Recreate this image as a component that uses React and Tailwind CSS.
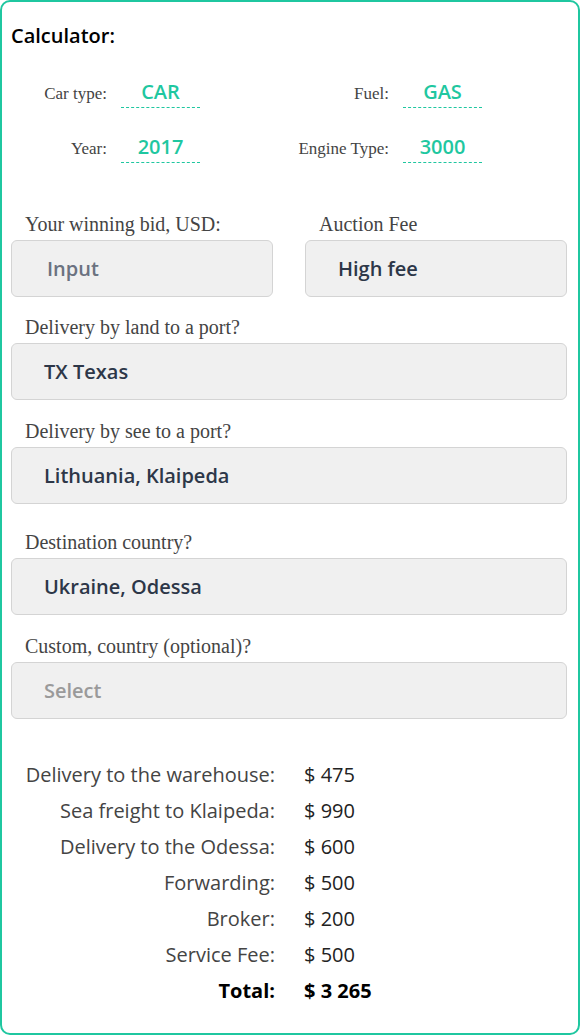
const spec = [
  [
    { label: 'Car type:', value: 'CAR' },
    { label: 'Fuel:', value: 'GAS' },
  ],
  [
    { label: 'Year:', value: '2017' },
    { label: 'Engine Type:', value: '3000' },
  ],
];

const totals = [
  ['Delivery to the warehouse:', '$ 475'],
  ['Sea freight to Klaipeda:', '$ 990'],
  ['Delivery to the Odessa:', '$ 600'],
  ['Forwarding:', '$ 500'],
  ['Broker:', '$ 200'],
  ['Service Fee:', '$ 500'],
];

const serif = "font-['Liberation_Serif',serif]";
const sans = "font-['Open_Sans',sans-serif]";

function SpecItem({ label, value, right }) {
  return (
    <div className="flex items-center">
      <span className={`${serif} text-right text-[17px] text-[#444] ${right ? 'w-[99px]' : 'w-[105px]'}`}>{label}</span>
      <span
        className={`${sans} ml-[14px] w-[79px] border-b border-dashed border-[#1fc7a0] pb-[2px] text-center text-[20px] font-semibold leading-[26px] text-[#1fc7a0]`}
      >
        {value}
      </span>
    </div>
  );
}

function Field({ label, value, muted, placeholder, className = '' }) {
  const tone = placeholder
    ? 'text-[#9a9a9a] pl-[32px]'
    : muted
      ? 'text-[#6b7280] pl-[35px]'
      : 'text-[#2d3748] pl-[32px]';
  return (
    <div className={className}>
      <div className={`${serif} pl-[14px] text-[20px] leading-[24px] text-[#444]`}>{label}</div>
      <div
        className={`${sans} mt-[4px] flex h-[57px] items-center rounded-[6px] border border-[#d4d4d4] bg-[#f0f0f0] text-[20px] font-semibold ${tone}`}
      >
        {value}
      </div>
    </div>
  );
}

export default function App() {
  return (
    <div className="h-[1035px] w-[580px] rounded-[10px] border-2 border-[#1fc7a0] bg-white pl-[9px] pr-[11px]">
      <h1 className={`${sans} pt-[22px] text-[20px] font-semibold leading-[24px] text-black`}>Calculator:</h1>

      <div className="-ml-[9px] mt-[31px] flex flex-col gap-[26px]">
        {spec.map((row, i) => (
          <div key={i} className="grid grid-cols-[288px_1fr]">
            <SpecItem {...row[0]} />
            <SpecItem {...row[1]} right />
          </div>
        ))}
      </div>

      <div className="mt-[49px] grid grid-cols-2 gap-x-[32px]">
        <Field label="Your winning bid, USD:" value="Input" muted />
        <Field label="Auction Fee" value="High fee" />
      </div>

      <Field className="mt-[18px]" label="Delivery by land to a port?" value="TX Texas" />
      <Field className="mt-[19px]" label="Delivery by see to a port?" value="Lithuania, Klaipeda" />
      <Field className="mt-[26px]" label="Destination country?" value="Ukraine, Odessa" />
      <Field className="mt-[19px]" label="Custom, country (optional)?" value="Select" placeholder />

      <div className={`${sans} mt-[43px] flex flex-col gap-[11px] text-[20px] leading-[25px]`}>
        {totals.map(([k, v]) => (
          <div key={k} className="flex">
            <span className="w-[264px] text-right text-[#444]">{k}</span>
            <span className="ml-[29px] text-[#222]">{v}</span>
          </div>
        ))}
        <div className="flex font-bold text-black">
          <span className="w-[264px] text-right">Total:</span>
          <span className="ml-[29px]">$ 3 265</span>
        </div>
      </div>
    </div>
  );
}
